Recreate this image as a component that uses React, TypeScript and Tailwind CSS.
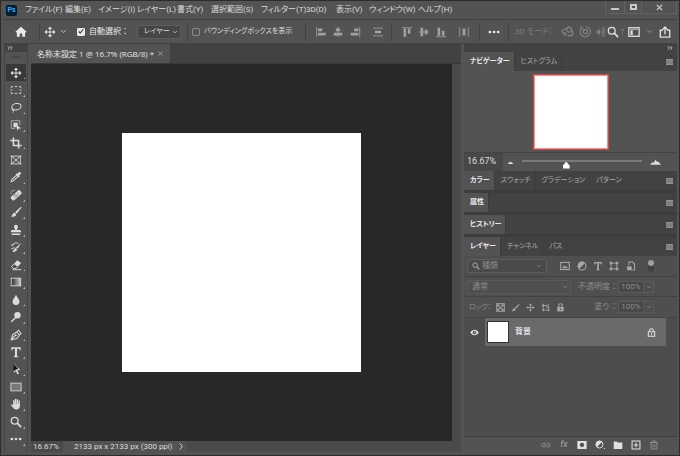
import type { ReactNode } from 'react';

const paths: Record<string, ReactNode> = {
  move: (
    <>
      <path d="M7 2v10M2 7h10" stroke="currentColor" strokeWidth="1.2" />
      <path d="M7 .5l2.500 3h-5zM7 13.500l2.500-3h-5zM.5 7l3-2.500v5zM13.500 7l-3-2.500v5z" fill="currentColor" />
    </>
  ),
  marquee: <path d="M1.500 4.500V3h2M5.500 3h3M10.500 3h2v1.500M12.500 6v2M12.500 9.500V11h-2M8.500 11h-3M3.500 11h-2V9.500M1.500 8V6" stroke="currentColor" />,
  lasso: (
    <>
      <ellipse cx="7.5" cy="5.5" rx="5.5" ry="3.7" transform="rotate(-12 7.5 5.5)" stroke="currentColor" strokeWidth="1.2" />
      <path d="M3.500 8c-1.300.6-1.200 2 0 2s1-1.700 0-1.700M4 10c.4 1-.1 2-1 2.500" stroke="currentColor" />
    </>
  ),
  select: (
    <>
      <path d="M11.500 7V2h-10v9H6" stroke="currentColor" opacity="0.7" />
      <path d="M4 4.500h5v3H7.500v2H4z" fill="currentColor" />
      <path d="M7 6l6 5-2.800.2L8.500 13.500z" fill="currentColor" />
    </>
  ),
  crop: <path d="M4 .5V10h9.500M.5 4H10v9.500" stroke="currentColor" strokeWidth="1.8" />,
  frame: <path d="M2 2.500h10v9H2zM2 2.500l10 9M12 2.500l-10 9M.5 2.500H2M12 2.500h1.500M.5 11.500H2M12 11.500h1.500" stroke="currentColor" />,
  dropper: (
    <>
      <path d="M1.500 12.500l.6-2.500L8 4.600l1.500 1.500L4 11.500z" stroke="currentColor" strokeWidth="1.2" />
      <path d="M6.500 3.500l1-1 1 1 1.700-2c1.200-1.400 3.500.8 2.200 2.200l-2 1.800 1 1-1 1z" fill="currentColor" />
    </>
  ),
  heal: (
    <>
      <rect x="0.2" y="4.700" width="14" height="5.600" rx="2" transform="rotate(-42 7 7.5)" fill="currentColor" />
      <path d="M4 9l1-1M4.500 7.500l2-2M6 10l3.500-3.500M6.500 7.500l.5.5M8 6l.5.5M9.500 5l1-1" stroke="#535353" strokeWidth="0.9" />
      <path d="M1.500 6C.5 3 3 1 6 1.700" stroke="currentColor" strokeDasharray="1.2 0.8" />
    </>
  ),
  brush: (
    <>
      <path d="M12.800 1c.8.4.6 1-.1 2L7.700 9 5.800 7.300z" fill="currentColor" />
      <path d="M5.200 7.800L7.100 9.600c.2 2.400-2.900 3.400-6.100 3 1.900-.9 1.500-4.300 4.200-4.800z" fill="currentColor" />
    </>
  ),
  stamp: <path d="M7 1a2.400 2.400 0 0 1 1.800 3.900L8 7h3.500c1 0 1.500.8 1.500 2.500H1C1 7.800 1.500 7 2.500 7H6l-.8-2.100A2.400 2.400 0 0 1 7 1zM2 11h10v1.700H2z" fill="currentColor" />,
  history: (
    <>
      <path d="M13.500 2L8.700 9 7 7.600zM6.500 8.200l1.800 1.500c0 2.200-3 3.300-5.600 3 1.500-.9 1.500-4.100 3.800-4.500z" fill="currentColor" />
      <path d="M1 4l2 1.700L4 3.200M3 5c1.500-3 4.500-3.500 7-2M1.500 9c2 0 3-.7 4-2" stroke="currentColor" strokeWidth="1.1" />
    </>
  ),
  eraser: (
    <>
      <path d="M8.500 1.500L13 4.800 9 9 4.500 5.800z" fill="currentColor" />
      <path d="M4.500 6L1.500 9l2.700 2.200H7l2-2M3 12.500h10" stroke="currentColor" strokeWidth="1.1" />
    </>
  ),
  gradient: (
    <>
      <defs>
        <linearGradient id="gradient-fill">
          <stop stopColor="#262626" />
          <stop offset="1" stopColor="#d0d0d0" />
        </linearGradient>
      </defs>
      <rect x="1.500" y="2.500" width="11" height="9" fill="url(#gradient-fill)" stroke="currentColor" />
    </>
  ),
  blur: <path d="M7 1c.6 2.500 4 4.800 4 7.700a4 4 0 0 1-8 0C3 5.800 6.400 3.500 7 1z" fill="currentColor" />,
  dodge: (
    <>
      <circle cx="8.700" cy="5" r="3.700" fill="currentColor" />
      <path d="M6.500 7.500l-5 5" stroke="currentColor" strokeWidth="1.700" />
    </>
  ),
  pen: (
    <>
      <path d="M1.500 12.500l1.500-6L8 3.500 11 7l-3 4.200zM8 3.500l1.700-2 3.200 3.700L11 7M1.500 12.500l4.500-5" stroke="currentColor" strokeWidth="1.200" />
      <circle cx="6.700" cy="7.300" r="1.200" fill="currentColor" />
    </>
  ),
  type: <path d="M1.500 1.500h11v3.500h-1C11.200 3.700 10.500 3.300 9 3.300H8.200v7.900c0 .6.400 1 1.500 1v.8h-5.400v-.8c1.100 0 1.500-.4 1.500-1V3.300H5c-1.500 0-2.200.4-2.500 1.700h-1z" fill="currentColor" />,
  path: (
    <>
      <path d="M4.500 1v10.500l2.300-2.300 1.700 4 1.900-.8-1.900-3.900 3.500-.3z" fill="currentColor" />
      <path d="M4 1v8.500L9.500 6.500z" fill="#161616" />
    </>
  ),
  rect: <rect x="1" y="2.500" width="12" height="9" fill="#777" stroke="currentColor" />,
  hand: (
    <>
      <path d="M4.500 7V3M6.500 6V1.700M8.600 6V2M10.700 7V3.500" stroke="currentColor" strokeWidth="1.600" strokeLinecap="round" />
      <path d="M3.700 6.500h7.800c.5 3.300-.3 6.500-3.500 7-3 .3-4.200-1.400-7.300-5.500 1-.9 2-.2 3 .8z" fill="currentColor" />
    </>
  ),
  zoom: (
    <>
      <circle cx="5.500" cy="5.500" r="4" stroke="currentColor" strokeWidth="1.500" />
      <path d="M8.400 8.400L13 13" stroke="currentColor" strokeWidth="2" />
    </>
  ),
  more: (
    <g fill="currentColor">
      <circle cx="2.200" cy="7" r="1.600" />
      <circle cx="7" cy="7" r="1.600" />
      <circle cx="11.800" cy="7" r="1.600" />
    </g>
  ),
  home: <path d="M7 1l6.500 5.800-.9 1-.8-.7V12.500H8.500V8.800h-3v3.700H2.200V7.100l-.8.700-.9-1z" fill="currentColor" />,
  chevron: <path d="M2.500 4.500L7 9l4.500-4.500" stroke="currentColor" strokeWidth="1.600" />,
  double: <path d="M2 3l4 4-4 4M8 3l4 4-4 4" stroke="currentColor" strokeWidth="2" />,
  alignLeft: (
    <>
      <path d="M2 1v12" stroke="currentColor" />
      <path d="M3.500 4.500h5M3.500 9.500h9" stroke="currentColor" strokeWidth="3" />
    </>
  ),
  alignCenter: (
    <>
      <path d="M7 1v12" stroke="currentColor" />
      <path d="M4.500 4.500h5M2 9.500h10" stroke="currentColor" strokeWidth="3" />
    </>
  ),
  alignRight: (
    <>
      <path d="M12.500 1v12" stroke="currentColor" />
      <path d="M6 4.500h5M2 9.500h9" stroke="currentColor" strokeWidth="3" />
    </>
  ),
  distribute: (
    <>
      <path d="M1 2.500h12M1 11.500h12" stroke="currentColor" />
      <path d="M3.500 7h7" stroke="currentColor" strokeWidth="3" />
    </>
  ),
  alignTop: (
    <>
      <path d="M1 2h12" stroke="currentColor" />
      <path d="M4.500 3v9.500M9.500 3v6" stroke="currentColor" strokeWidth="3" />
    </>
  ),
  alignMiddle: (
    <>
      <path d="M1 7h12" stroke="currentColor" />
      <path d="M4.500 2v10M9.500 4v6" stroke="currentColor" strokeWidth="3" />
    </>
  ),
  alignBottom: (
    <>
      <path d="M1 12.500h12" stroke="currentColor" />
      <path d="M4.500 2v9.500M9.500 5.500v6" stroke="currentColor" strokeWidth="3" />
    </>
  ),
  distributeH: (
    <>
      <path d="M2 1.500v11M12 1.500v11" stroke="currentColor" />
      <path d="M7 3v8" stroke="currentColor" strokeWidth="3.500" />
    </>
  ),
  orbit: (
    <>
      <path d="M5 9.500C2 9.500.5 7.500 1.500 6 2.500 4.500 5 3.500 8 3.500M11 5c2 1 2.500 3 1 4.500" stroke="currentColor" strokeWidth="1.200" />
      <circle cx="8.500" cy="5" r="2.700" stroke="currentColor" strokeWidth="1.200" />
      <path d="M3.500 8l2 1.700-2 1.800M7 11.500h3.500c1.500 0 2.500-1 2.500-2.500" stroke="currentColor" strokeWidth="1.200" />
    </>
  ),
  roll: (
    <>
      <path d="M2.500 3.500a5.600 5.600 0 1 0 4.500-2M2.500 1v3h3" stroke="currentColor" strokeWidth="1.100" />
      <circle cx="7" cy="7" r="2.300" stroke="currentColor" strokeWidth="1.300" />
    </>
  ),
  pan: (
    <>
      <circle cx="10.500" cy="2.800" r="2" stroke="currentColor" strokeWidth="1.300" />
      <circle cx="10.500" cy="11.200" r="2" stroke="currentColor" strokeWidth="1.300" />
      <circle cx="10.500" cy="7" r="1.500" stroke="currentColor" strokeWidth="1.300" />
      <path d="M.5 7L5 3.500v7zM5 7h4" fill="currentColor" stroke="currentColor" />
    </>
  ),
  workspace: (
    <>
      <rect x="1" y="2" width="12" height="10" stroke="currentColor" strokeWidth="1.500" />
      <path d="M3 5h2.500v5.500H3z" fill="currentColor" />
      <path d="M3 4h8.500" stroke="currentColor" strokeWidth="0.800" />
    </>
  ),
  share: <path d="M4.500 5H1.500v8h11V5H9.500M7 9.500V1.500M4.300 4L7 1.200 9.700 4" stroke="currentColor" strokeWidth="1.600" />,
  image: (
    <>
      <rect x="1" y="2" width="12" height="10" stroke="currentColor" strokeWidth="1.500" />
      <path d="M3 10l2.500-4 2 2.500L9 7l2 3z" fill="currentColor" />
    </>
  ),
  adjust: (
    <>
      <circle cx="7" cy="7" r="5.500" stroke="currentColor" strokeWidth="1.500" />
      <path d="M10.900 3.100a5.500 5.500 0 0 0-7.800 7.800z" fill="currentColor" />
    </>
  ),
  shape: (
    <>
      <path d="M3 3h8v8H3z" stroke="currentColor" strokeWidth="1.200" />
      <path d="M1 1h3.500v3.500H1zM9.500 1H13v3.500H9.500zM1 9.500h3.500V13H1zM9.500 9.500H13V13H9.500z" fill="currentColor" />
    </>
  ),
  smart: (
    <>
      <path d="M4 6V1.500h5l3 3v8H9" stroke="currentColor" strokeWidth="1.500" />
      <path d="M1.500 7.500H8v5.500H1.500z" fill="currentColor" />
    </>
  ),
  checker: (
    <>
      <rect x="1" y="1" width="12" height="12" stroke="currentColor" strokeWidth="1.300" />
      <path d="M2 2h3.300v3.300H2zM8.700 2H12v3.300H8.700zM5.300 5.300h3.400v3.400H5.300zM2 8.700h3.300V12H2zM8.700 8.700H12V12H8.700z" fill="currentColor" />
    </>
  ),
  artboard: <path d="M3.500 1v12M1 4h8.500M12 5v8M2 11h11M9.500 4L12.500 1.500M9.500 4v4" stroke="currentColor" strokeWidth="1.500" />,
  lock: (
    <>
      <path d="M2 6h10v7H2z" fill="currentColor" />
      <path d="M4.200 6V4a2.800 2.800 0 0 1 5.600 0v2" stroke="currentColor" strokeWidth="1.700" />
      <path d="M6.300 8h1.400v3H6.300z" fill="#4f4f4f" />
    </>
  ),
  lockOutline: (
    <>
      <path d="M2 6h10v7H2zM4.200 6V4a2.800 2.800 0 0 1 5.600 0v2" stroke="currentColor" strokeWidth="1.600" />
      <path d="M6.200 8h1.600v3H6.200z" fill="currentColor" />
    </>
  ),
  eye: (
    <>
      <path d="M.5 7c3.500-5.500 9.500-5.500 13 0-3.500 5.500-9.500 5.500-13 0z" fill="currentColor" />
      <circle cx="7" cy="7" r="2.800" fill="#4d4d4d" />
      <circle cx="7.500" cy="6.500" r="1" fill="currentColor" />
    </>
  ),
  link: <path d="M6 4.500H3.800a2.500 2.500 0 0 0 0 5H6M8 4.500h2.200a2.500 2.500 0 0 1 0 5H8M4.500 7h5" stroke="currentColor" strokeWidth="1.400" />,
  mask: <path d="M.5 1.500h13v11H.5zM7 4a3 3 0 1 0 0 6 3 3 0 0 0 0-6z" fill="currentColor" fillRule="evenodd" />,
  folder: <path d="M1 2h4.500l1 1.500H13v9H1z" fill="currentColor" />,
  plus: <path d="M1.500 1.500h11v11h-11zM7 4v6M4 7h6" stroke="currentColor" strokeWidth="1.500" />,
  trash: <path d="M1.500 3.500h11M5 3V1.500h4V3M3 4v8.500h8V4M5.700 6v4.500M8.300 6v4.500" stroke="currentColor" strokeWidth="1.400" />,
};

function Icon({ name, className = 'size-3' }: { name: string; className?: string }) {
  return (
    <svg viewBox="0 0 14 14" fill="none" className={`shrink-0 ${className}`} aria-hidden="true">
      {paths[name]}
    </svg>
  );
}

const menus = [
  { label: 'ファイル(F)', width: 'w-[40px]' },
  { label: '編集(E)', width: 'w-[33px]' },
  { label: 'イメージ(I)', width: 'w-[39px]' },
  { label: 'レイヤー(L)', width: 'w-[40px]' },
  { label: '書式(Y)', width: 'w-[34px]' },
  { label: '選択範囲(S)', width: 'w-[50px]' },
  { label: 'フィルター(T)', width: 'w-[45px]' },
  { label: '3D(D)', width: 'w-[30px]' },
  { label: '表示(V)', width: 'w-[33px]' },
  { label: 'ウィンドウ(W)', width: 'w-[49px]' },
  { label: 'ヘルプ(H)', width: 'w-[40px]' },
];

const tools = [
  'move', 'marquee', 'lasso', 'select', 'crop', 'frame', 'dropper', 'heal', 'brush', 'stamp', 'history',
  'eraser', 'gradient', 'blur', 'dodge', 'pen', 'type', 'path', 'rect', 'hand', 'zoom', 'more',
];

function Divider() {
  return <span className="block h-[18px] w-px shrink-0 bg-[#434343]" />;
}

function MenuBar() {
  return (
    <header className="flex h-[18px] shrink-0 items-center pl-[5px]">
      <span className="mr-2 flex size-[11px] items-center justify-center rounded-xs bg-[#001e36] text-[7px] leading-none font-bold text-[#31a8ff]">
        Ps
      </span>
      <nav className="flex text-[8px]">
        {menus.map((menu) => (
          <button key={menu.label} className={`text-left whitespace-nowrap ${menu.width}`}>
            {menu.label}
          </button>
        ))}
      </nav>
      <div className="mr-0.5 ml-auto flex h-[13px] self-start border border-t-0 border-[#626262]">
        <button aria-label="Minimize" className="flex w-[19px] items-center justify-center border-r border-[#626262] pt-1">
          <span className="h-0.5 w-2 bg-[#c8c8c8]" />
        </button>
        <button aria-label="Maximize" className="flex w-[17px] items-center justify-center border-r border-[#626262]">
          <span className="h-[6px] w-[7px] border-2 border-[#c8c8c8]" />
        </button>
        <button aria-label="Close" className="flex w-[34px] items-center justify-center">
          <svg viewBox="0 0 8 8" className="size-[7px]" aria-hidden="true">
            <path d="M1 1l6 6M7 1L1 7" stroke="#c8c8c8" strokeWidth="1.600" />
          </svg>
        </button>
      </div>
    </header>
  );
}

function OptionsBar() {
  return (
    <div className="mr-0.5 ml-0.5 flex h-[25px] shrink-0 items-center border-y border-[#424242] text-[8px]">
      <button aria-label="Home" className="ml-3 text-[#ececec]">
        <Icon name="home" />
      </button>
      <span className="ml-3"><Divider /></span>
      <button aria-label="Move tool" className="ml-1 flex items-center gap-1">
        <Icon name="move" />
        <Icon name="chevron" className="size-[7px]" />
      </button>
      <label className="ml-[10px] flex items-center gap-1 whitespace-nowrap text-[#ececec] [font-feature-settings:normal]">
        <input type="checkbox" defaultChecked className="peer sr-only" />
        <span className="flex size-2 items-center justify-center rounded-[1px] border border-[#e8e8e8] peer-checked:bg-[#e8e8e8]">
          <svg viewBox="0 0 8 8" className="size-[7px]" aria-hidden="true">
            <path d="M1 4l2 2 4-5" fill="none" stroke="#333" strokeWidth="1.500" />
          </svg>
        </span>
        自動選択：
      </label>
      <span className="ml-2 flex h-[14px] w-11 items-center rounded-xs border border-[#5d5d5d] bg-[#464646] pr-0.5">
        <select aria-label="自動選択" className="min-w-0 flex-1 appearance-none pl-1.5 text-[7px]">
          <option>レイヤー</option>
        </select>
        <Icon name="chevron" className="size-[6px]" />
      </span>
      <span className="mr-1 ml-1.5"><Divider /></span>
      <label className="flex items-center gap-1 text-[7px] whitespace-nowrap">
        <input type="checkbox" className="size-2 appearance-none rounded-xs border border-[#8a8a8a]" />
        バウンディングボックスを表示
      </label>
      <div className="ml-auto flex items-center text-[#a0a0a0]">
        <Divider />
        <button aria-label="Align left" className="ml-[9px]"><Icon name="alignLeft" /></button>
        <button aria-label="Align center" className="ml-[5px]"><Icon name="alignCenter" /></button>
        <button aria-label="Align right" className="ml-[5px]"><Icon name="alignRight" /></button>
        <button aria-label="Distribute vertically" className="ml-[11px]"><Icon name="distribute" /></button>
        <span className="ml-[7px]"><Divider /></span>
        <button aria-label="Align top" className="ml-[9px]"><Icon name="alignTop" /></button>
        <button aria-label="Align middle" className="ml-[5px]"><Icon name="alignMiddle" /></button>
        <button aria-label="Align bottom" className="ml-[5px]"><Icon name="alignBottom" /></button>
        <button aria-label="Distribute horizontally" className="ml-[11px]"><Icon name="distributeH" /></button>
        <span className="ml-[9px]"><Divider /></span>
        <button aria-label="More options" className="ml-2 text-[#e8e8e8]"><Icon name="more" /></button>
        <span className="ml-2"><Divider /></span>
        <span className="ml-1.5 w-11 whitespace-nowrap text-[#7d7d7d]">3D モード：</span>
        <button aria-label="Orbit" className="ml-0.5 text-[#858585]"><Icon name="orbit" className="size-[13px]" /></button>
        <button aria-label="Roll" className="ml-[5px] text-[#858585]"><Icon name="roll" className="size-[13px]" /></button>
        <button aria-label="Pan" className="ml-1 text-[#858585]"><Icon name="pan" className="size-[10px]" /></button>
        <button aria-label="Search" className="ml-px text-[#e0e0e0]"><Icon name="zoom" /></button>
        <svg viewBox="0 0 4 8" className="ml-0.5 h-2 w-1" aria-hidden="true">
          <path d="M0 1.500h2.500v2L1 5M1 6.500h1" fill="none" stroke="#777" />
        </svg>
        <button aria-label="Workspace" className="ml-[3px] text-[#e0e0e0]"><Icon name="workspace" /></button>
        <Icon name="chevron" className="ml-1.5 size-[7px]" />
        <button aria-label="Share" className="mr-1.5 ml-1.5 text-[#e0e0e0]"><Icon name="share" /></button>
      </div>
    </div>
  );
}

function Toolbar() {
  return (
    <aside className="mr-[3px] ml-[3px] flex w-6 shrink-0 flex-col border-x border-[#464646] bg-[#535353]">
      <div className="flex h-2 shrink-0 items-center bg-[#424242] pl-0.5">
        <Icon name="double" className="size-[6px]" />
      </div>
      <span className="mx-auto mt-1 h-[2px] w-3 shrink-0 bg-[#494949]" />
      <div className="mt-1.5 mb-1 flex min-h-0 flex-1 flex-col">
        {tools.map((tool) => (
          <button
            key={tool}
            aria-label={tool}
            className={`relative mx-px flex min-h-0 flex-1 items-center justify-center ${
              tool === 'move' ? 'bg-[#383838]' : ''
            }`}
          >
            <Icon name={tool} />
            {tool !== 'frame' && (
              <span className="absolute right-px bottom-0.5 size-0.5 bg-[#c8c8c8] [clip-path:polygon(100%_0,100%_100%,0_100%)]" />
            )}
          </button>
        ))}
      </div>
    </aside>
  );
}

function Workspace() {
  return (
    <main className="flex min-w-0 flex-1 flex-col">
      <div className="flex h-5 shrink-0 border-b border-[#383838] bg-[#424242]">
        <div className="flex w-[139px] items-center bg-[#535353] pl-1.5 font-['Open_Sans','Noto_Sans_CJK_JP',sans-serif] text-[8px] whitespace-nowrap text-[#e6e6e6]">
          名称未設定 1 @ 16.7% (RGB/8) *
          <button aria-label="Close document" className="mr-[7px] ml-auto">
            <svg viewBox="0 0 8 8" className="size-[5px]" aria-hidden="true">
              <path d="M1 1l6 6M7 1L1 7" stroke="#aaa" strokeWidth="1.500" />
            </svg>
          </button>
        </div>
      </div>
      <div className="flex min-h-0 flex-1">
        <div className="flex min-w-0 flex-1 items-center justify-center bg-[#282828]">
          <div className="aspect-square w-[57%] bg-white" />
        </div>
        <div className="w-[9px] shrink-0 bg-[#4a4a4a]" />
      </div>
      <footer className="flex h-[11px] shrink-0 items-center bg-[#4a4a4a] text-[8px] leading-none whitespace-nowrap">
        <span className="w-8 pl-0.5">16.67%</span>
        <span className="flex h-full w-[124px] items-center justify-between bg-[#535353] pr-1 pl-[11px]">
          2133 px x 2133 px (300 ppi)
          <svg viewBox="0 0 4 8" className="h-[7px] w-1" aria-hidden="true">
            <path d="M.5.5L3.500 4l-3 3.500" fill="none" stroke="currentColor" />
          </svg>
        </span>
      </footer>
    </main>
  );
}

function PanelTabs({ tabs }: { tabs: string[] }) {
  return (
    <div className="flex h-[19px] shrink-0 bg-[#424242] text-[7px]">
      {tabs.map((tab, i) => (
        <button
          key={tab}
          className={`border-r border-[#3c3c3c] pr-1 pl-1.5 whitespace-nowrap ${
            i === 0 ? 'bg-[#535353] font-bold text-[#ececec]' : 'text-[#a8a8a8]'
          }`}
        >
          {tab}
        </button>
      ))}
      <button aria-label="Panel menu" className="mr-1 ml-auto flex items-center">
        <span className="h-[6px] w-[7px] border-y border-[#929292] bg-[#808080]" />
      </button>
    </div>
  );
}

function Navigator() {
  return (
    <section className="bg-[#535353]">
      <PanelTabs tabs={['ナビゲーター', 'ヒストグラム']} />
      <div className="flex h-[82px] items-center justify-center border-b border-[#444]">
        <div className="size-[76px] border border-[#d04848] bg-white outline outline-[#d84848]/60 -outline-offset-2" />
      </div>
      <div className="flex h-[18px] items-center">
        <span className="flex h-full w-[39px] items-center bg-[#484848] pl-[3px] text-[9px]">16.67%</span>
        <svg viewBox="0 0 8 4" className="ml-1 h-[3px] w-[7px]" aria-hidden="true">
          <path d="M0 4l3-3 1 1 1-1 3 3z" fill="#ddd" />
        </svg>
        <input
          type="range"
          aria-label="Zoom"
          min="0"
          max="100"
          defaultValue="36"
          className="mx-2 h-[14px] min-w-0 flex-1 appearance-none bg-[linear-gradient(#7a7a7a,#7a7a7a)] bg-[length:100%_2px] bg-[position:0_5px] bg-no-repeat [&::-webkit-slider-thumb]:mt-[6px] [&::-webkit-slider-thumb]:h-[7px] [&::-webkit-slider-thumb]:w-[7px] [&::-webkit-slider-thumb]:appearance-none [&::-webkit-slider-thumb]:bg-white [&::-webkit-slider-thumb]:[clip-path:polygon(50%_0,100%_60%,100%_100%,0_100%,0_60%)]"
        />
        <svg viewBox="0 0 12 6" className="mr-4 h-[6px] w-[11px]" aria-hidden="true">
          <path d="M0 6l3-3 1 1 2-3.500 2 2.500 1-.5 3 3.500z" fill="#ddd" />
        </svg>
      </div>
    </section>
  );
}

function PercentField({ label }: { label: string }) {
  return (
    <label className="flex items-center text-[8px] whitespace-nowrap">
      <span className="[font-feature-settings:normal]">{label}</span>
      <input
        type="text"
        defaultValue="100%"
        className="h-3 w-[26px] border border-[#5b5b5b] bg-[#484848] text-center text-[8px]"
      />
      <span className="flex h-3 w-[10px] items-center justify-center border border-l-0 border-[#5b5b5b]">
        <Icon name="chevron" className="size-[6px]" />
      </span>
    </label>
  );
}

function Layers() {
  return (
    <section className="flex min-h-0 flex-1 flex-col bg-[#4f4f4f] text-[#8c8c8c]">
      <PanelTabs tabs={['レイヤー', 'チャンネル', 'パス']} />
      <div className="flex h-[21px] shrink-0 items-center border-b border-[#424242] pl-[3px]">
        <span className="flex h-[14px] w-20 items-center rounded-xs border border-[#5d5d5d] bg-[#4a4a4a] px-1">
          <Icon name="zoom" className="size-2 text-[#b0b0b0]" />
          <select aria-label="フィルター" className="ml-0.5 min-w-0 flex-1 appearance-none text-[8px]">
            <option>種類</option>
          </select>
          <Icon name="chevron" className="size-[6px]" />
        </span>
        <div className="ml-[13px] flex items-center gap-1.5 text-[#a8a8a8]">
          <button aria-label="Pixel layers"><Icon name="image" className="size-[10px]" /></button>
          <button aria-label="Adjustment layers" className="ml-px"><Icon name="adjust" className="size-[10px]" /></button>
          <button aria-label="Type layers"><Icon name="type" className="size-[10px]" /></button>
          <button aria-label="Shape layers"><Icon name="shape" className="size-[10px]" /></button>
          <button aria-label="Smart objects" className="ml-px"><Icon name="smart" className="size-[10px]" /></button>
        </div>
        <button aria-label="Toggle filter" className="ml-3 flex h-3 w-1.5 items-start rounded-full bg-[#414141]">
          <span className="size-1.5 rounded-full bg-[#a0a0a0]" />
        </button>
      </div>
      <div className="flex h-5 shrink-0 items-center border-b border-[#424242] pl-[3px]">
        <span className="flex h-[14px] w-[104px] items-center rounded-xs border border-[#5b5b5b] pr-0.5">
          <select aria-label="描画モード" className="min-w-0 flex-1 appearance-none pl-1 text-[8px]">
            <option>通常</option>
          </select>
          <Icon name="chevron" className="size-[6px]" />
        </span>
        <div className="mr-[23px] ml-auto"><PercentField label="不透明度：" /></div>
      </div>
      <div className="flex h-5 shrink-0 items-center pl-[5px]">
        <span className="w-[27px] text-[7px] whitespace-nowrap">ロック：</span>
        <div className="flex items-center gap-1.5 text-[#a8a8a8]">
          <button aria-label="Lock transparency"><Icon name="checker" className="size-[9px]" /></button>
          <button aria-label="Lock pixels"><Icon name="brush" className="size-[9px]" /></button>
          <button aria-label="Lock position"><Icon name="move" className="size-[9px]" /></button>
          <button aria-label="Lock artboard"><Icon name="artboard" className="size-[9px]" /></button>
          <button aria-label="Lock all"><Icon name="lock" className="size-[9px]" /></button>
        </div>
        <div className="mr-[23px] ml-auto"><PercentField label="塗り：" /></div>
      </div>
      <div className="min-h-0 flex-1 border-t border-[#444] bg-[#4d4d4d]">
        <div className="flex h-7 items-center text-[#e4e4e4]">
          <button aria-label="Toggle visibility" className="flex w-[21px] justify-center">
            <Icon name="eye" className="size-[9px]" />
          </button>
          <div className="mr-[11px] flex h-full flex-1 items-center bg-[#6a6a6a] pl-0.5">
            <span className="size-[22px] border border-[#333] bg-white" />
            <span className="ml-1.5 text-[8px] font-bold">背景</span>
            <Icon name="lockOutline" className="mr-2.5 ml-auto size-[9px]" />
          </div>
        </div>
      </div>
      <div className="flex h-4 shrink-0 items-center justify-end gap-2 border-t border-[#404040] bg-[#535353] pr-[18px] text-[#e0e0e0]">
        <button aria-label="Link layers" className="text-[#8c8c8c]"><Icon name="link" className="size-[10px]" /></button>
        <button aria-label="Layer style" className="w-[10px] text-[9px] leading-none text-[#a4a4a4] italic">fx</button>
        <button aria-label="Add mask"><Icon name="mask" className="size-[10px]" /></button>
        <button aria-label="Add adjustment" className="flex items-end">
          <Icon name="adjust" className="size-[9px]" />
          <span className="size-px bg-[#e0e0e0]" />
        </button>
        <button aria-label="New group"><Icon name="folder" className="size-[10px]" /></button>
        <button aria-label="New layer"><Icon name="plus" className="size-[10px]" /></button>
        <button aria-label="Delete layer" className="text-[#8c8c8c]"><Icon name="trash" className="size-[10px]" /></button>
      </div>
    </section>
  );
}

export default function App() {
  return (
    <div
      lang="ja"
      className="flex h-screen w-full flex-col overflow-hidden border border-[#2c2c2c] bg-[#535353] pb-[3px] font-[Roboto,'Noto_Sans_CJK_JP',sans-serif] text-[#dcdcdc] [font-feature-settings:'palt']"
    >
      <MenuBar />
      <OptionsBar />
      <div className="flex min-h-0 flex-1">
        <Toolbar />
        <Workspace />
        <div className="mr-0.5 ml-[3px] flex w-[213px] shrink-0 flex-col bg-[#3c3c3c]">
          <div className="flex h-2 shrink-0 items-center justify-end bg-[#424242] pr-1">
            <Icon name="double" className="size-[6px]" />
          </div>
          <div className="flex min-h-0 flex-1 flex-col gap-[3px]">
            <div>
              <Navigator />
              <PanelTabs tabs={['カラー', 'スウォッチ', 'グラデーション', 'パターン']} />
            </div>
            <PanelTabs tabs={['属性']} />
            <PanelTabs tabs={['ヒストリー']} />
            <Layers />
          </div>
        </div>
      </div>
    </div>
  );
}
